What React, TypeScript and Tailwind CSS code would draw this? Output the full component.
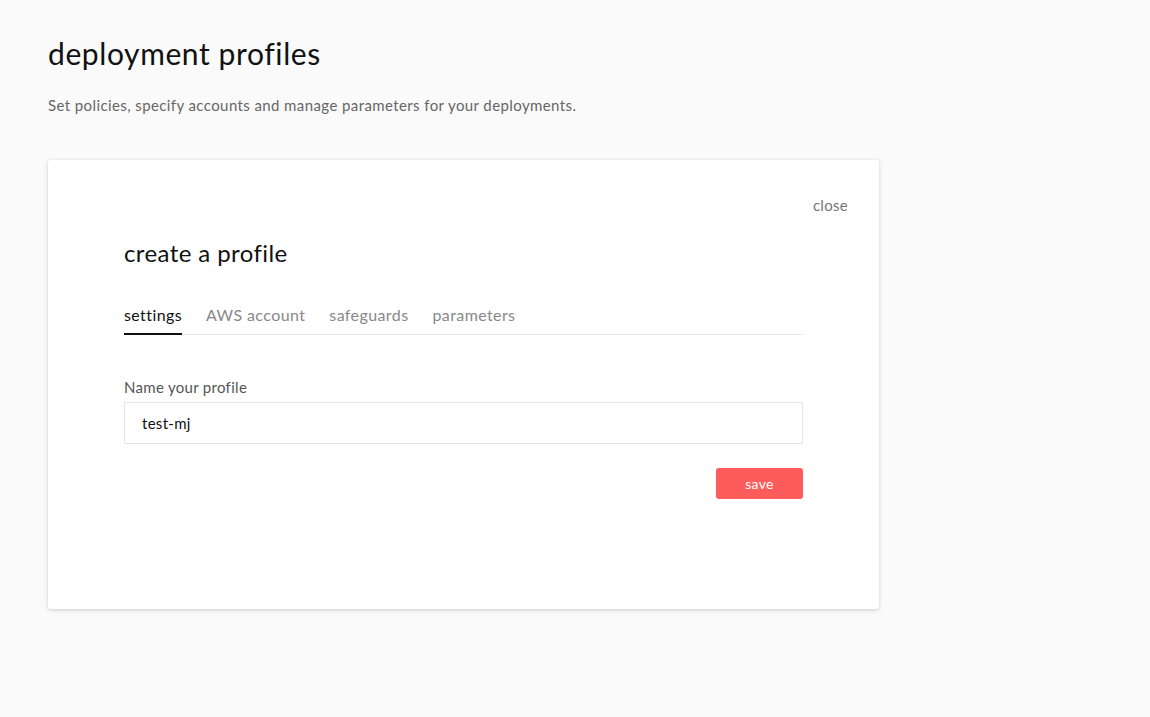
import React, { useState } from "react";

const tabs = ["settings", "AWS account", "safeguards", "parameters"];

export default function App() {
  const [active, setActive] = useState("settings");
  const [name, setName] = useState("test-mj");

  return (
    <div className="min-h-[717px] bg-[#fafafa] px-12 pt-[34px] font-['Lato',sans-serif] text-[#222]">
      <h1 className="text-[30px] font-normal leading-[38px] tracking-[0.6px] text-[#111]">deployment profiles</h1>
      <p className="mt-[23px] text-[15px] leading-5 tracking-[0.4px] text-[#666]">
        Set policies, specify accounts and manage parameters for your deployments.
      </p>

      <div className="mt-[45px] h-[449px] w-[831px] rounded-[3px] bg-white shadow-[0_1px_4px_rgba(0,0,0,0.18)]">
        <div className="flex justify-end pr-[31px] pt-[35px]">
          <button className="text-[15px] leading-5 tracking-[0.3px] text-[#777]">close</button>
        </div>

        <div className="px-[76px] pt-[23px]">
          <h2 className="text-[24px] font-normal leading-[30px] tracking-[0.4px] text-[#111]">create a profile</h2>

          <div className="mt-[37px] flex gap-6 border-b border-[#e8e8e8]">
            {tabs.map((t) => (
              <button
                key={t}
                onClick={() => setActive(t)}
                className={`-mb-px pb-[8px] text-[16px] leading-5 tracking-[0.4px] ${
                  active === t ? "border-b-2 border-[#111] text-[#111]" : "border-b-2 border-transparent text-[#888]"
                }`}
              >
                {t}
              </button>
            ))}
          </div>

          <label className="mt-[42px] block text-[15px] leading-5 tracking-[0.3px] text-[#555]">Name your profile</label>
          <input
            autoFocus
            value={name}
            onChange={(e) => setName(e.target.value)}
            className="mt-[5px] h-[42px] w-full border border-[#e6e6e6] px-[17px] text-[15px] tracking-[0.3px] text-[#111] caret-black outline-none"
          />

          <div className="mt-[24px] flex justify-end">
            <button className="h-[31px] w-[87px] rounded-[3px] bg-[#fd5c5a] text-[14px] tracking-[0.3px] text-white">save</button>
          </div>
        </div>
      </div>
    </div>
  );
}
